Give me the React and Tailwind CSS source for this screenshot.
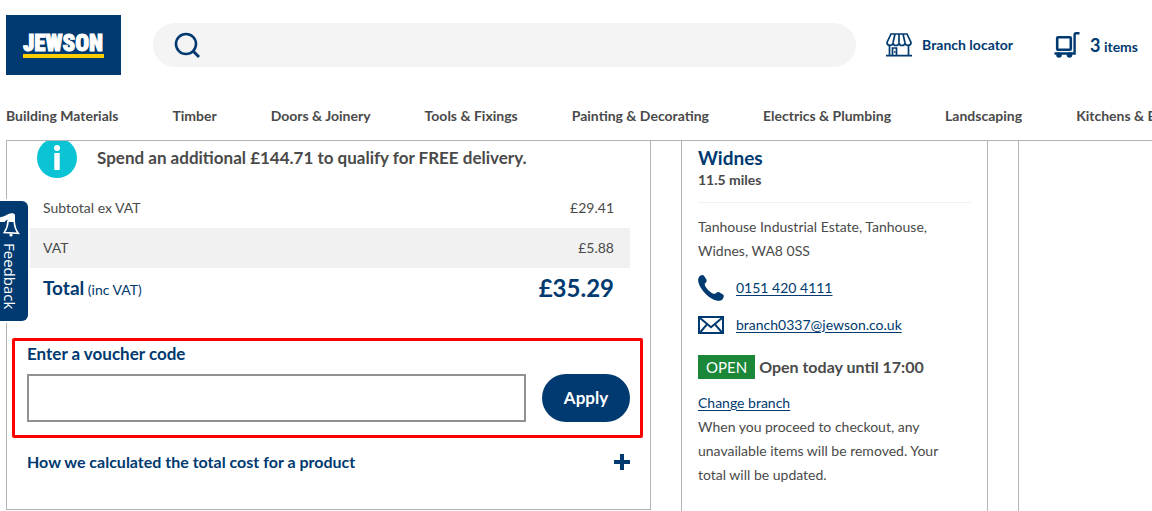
const NAV_ITEMS = [
  "Building Materials",
  "Timber",
  "Doors & Joinery",
  "Tools & Fixings",
  "Painting & Decorating",
  "Electrics & Plumbing",
  "Landscaping",
  "Kitchens & Bathrooms",
];

function Logo() {
  return (
    <a href="#home" className="shrink-0" aria-label="Jewson">
      <svg width="115" height="60" viewBox="0 0 115 60">
        <rect width="115" height="60" fill="#003a70" />
        <text
          x="57"
          y="36"
          textAnchor="middle"
          fontFamily="'Roboto Condensed', Roboto, sans-serif"
          fontWeight="900"
          fontSize="23"
          fill="#fff"
          stroke="#fff"
          strokeWidth="1"
        >
          JEWSON
        </text>
        <rect x="17" y="39" width="81" height="4" fill="#ffce00" />
      </svg>
    </a>
  );
}

function SearchIcon() {
  return (
    <svg width="27" height="27" viewBox="0 0 27 27" fill="none" stroke="#003a70" strokeWidth="2.6">
      <circle cx="12" cy="12" r="10" />
      <path d="M18.8 18.8L25 25" strokeWidth="3" />
    </svg>
  );
}

function StoreIcon() {
  return (
    <svg width="26" height="24" viewBox="0 0 26 24" fill="none" stroke="#003a70" strokeWidth="1.7">
      <path d="M5 1H21L25 9.5C25 13.4 19.2 13.4 19 9.8C18.6 13.4 13.4 13.4 13 9.8C12.6 13.4 7.4 13.4 7 9.8C6.8 13.4 1 13.4 1 9.5Z" />
      <path d="M9 1L7 9.8M13 1V9.8M17 1L19 9.8" />
      <path d="M3.5 12.5V22M22.5 12.5V22M0 22.6H26M6.5 22V15H10.5V22" />
      <path d="M8.8 18V20" strokeWidth="1.2" />
    </svg>
  );
}

function TrolleyIcon() {
  return (
    <svg width="26" height="26" viewBox="0 0 26 26" fill="none" stroke="#003a70">
      <rect x="3.2" y="5.2" width="13.6" height="12.6" rx="1" strokeWidth="2.6" />
      <path d="M25.5 1.3H22.2C21 1.3 20.6 2 20.6 3V21.5H0.5" strokeWidth="2.4" />
      <circle cx="5" cy="23" r="2.8" fill="#003a70" stroke="none" />
      <circle cx="15.5" cy="23" r="2.8" fill="#003a70" stroke="none" />
    </svg>
  );
}

function InfoIcon() {
  return (
    <svg width="40" height="40" viewBox="0 0 40 40" className="shrink-0">
      <circle cx="20" cy="20" r="20" fill="#0ac4d6" />
      <circle cx="20" cy="10" r="3" fill="#fff" />
      <path d="M17.3 15H22.7V32H17.3Z" fill="#fff" />
    </svg>
  );
}

function PhoneIcon() {
  return (
    <svg width="26" height="26" viewBox="0 0 26 26" fill="#003a70" className="shrink-0">
      <path d="M1.2 1.8C2.4 0.2 4.8-0.6 6 0.8L8.4 4.6C9.2 6.2 8 7.4 6.8 8.6C6.4 10.6 8.2 13 10.6 15.4C13 17.6 15.4 19.2 17.2 18.8C18.6 17.4 20 16.6 21.6 17.4L25 19.6C26.4 20.8 25.8 22.8 24.4 24.4C22.4 26.4 18.6 26.4 14 23.8C9.6 21.4 5.4 17.2 2.8 12.8C0.2 8.4-0.8 4.2 1.2 1.8Z" />
    </svg>
  );
}

function MailIcon() {
  return (
    <svg width="26" height="18" viewBox="0 0 26 18" fill="none" stroke="#003a70" className="shrink-0">
      <rect x="1" y="1" width="24" height="16" strokeWidth="2" />
      <path d="M2 2L13 11.2L24 2M2 16.5L9.2 8.2M24 16.5L16.8 8.2" strokeWidth="2" />
    </svg>
  );
}

function MegaphoneIcon() {
  return (
    <svg width="20" height="24" viewBox="0 0 20 24" fill="none" stroke="#fff" strokeWidth="1.6">
      <path d="M0 4.2C3.4 4.2 6 2 8.4 1C11 0 14.8-0.2 15 2.4V9H7.4V6.6L6 7.4L4.6 9H0Z" fill="#fff" stroke="none" />
      <path d="M8 8C8 13 6.8 15.6 4.2 19.6L18.4 20.4C15.4 16.6 14.4 13 14.2 8" />
      <circle cx="11" cy="22" r="1.6" fill="#fff" stroke="none" />
    </svg>
  );
}

function Header() {
  return (
    <header>
      <div className="flex items-center pl-[6px] pr-[14px] pt-[15px]">
        <Logo />
        <form className="ml-8 flex h-11 flex-1 items-center rounded-full bg-[#f4f4f4] pl-[21px] pr-5">
          <button type="submit" aria-label="Search"><SearchIcon /></button>
          <input type="search" aria-label="Search products" className="ml-3 min-w-0 flex-1 bg-transparent text-base outline-none" />
        </form>
        <a href="#branches" className="ml-[30px] flex items-center gap-[10px] whitespace-nowrap text-sm font-bold text-[#003a70]">
          <StoreIcon />
          Branch locator
        </a>
        <a href="#basket" className="ml-[41px] flex items-center gap-[10px] whitespace-nowrap text-sm font-bold text-[#003a70]">
          <TrolleyIcon />
          <span><span className="text-lg">3</span> items</span>
        </a>
      </div>
      <nav className="ml-[6px] mt-[31px] flex gap-[54px] overflow-hidden border-b border-[#b4b4b4] pb-[14px]">
        {NAV_ITEMS.map((item) => (
          <a key={item} href="#category" className="shrink-0 whitespace-nowrap text-sm font-bold leading-5 text-[#4a4a4a]">{item}</a>
        ))}
      </nav>
    </header>
  );
}

function Totals() {
  return (
    <table className="mt-[10px] w-full">
      <tbody>
        <tr className="h-10">
          <th scope="row" className="pl-4 text-left font-normal">Subtotal ex VAT</th>
          <td className="pr-4 text-right">£29.41</td>
        </tr>
        <tr className="h-10 bg-[#f1f1f1]">
          <th scope="row" className="pl-4 text-left font-normal">VAT</th>
          <td className="pr-4 text-right">£5.88</td>
        </tr>
        <tr className="h-10 text-[#003a70]">
          <th scope="row" className="pl-4 text-left font-normal"><span className="text-[19px] font-bold">Total</span> (inc VAT)</th>
          <td className="pr-4 text-right text-2xl font-bold">£35.29</td>
        </tr>
      </tbody>
    </table>
  );
}

function Summary() {
  return (
    <section className="self-start overflow-hidden border-x border-b border-[#b4b4b4]">
      <div className="px-5">
        <div className="-mt-[3px] flex items-center gap-5 pl-[10px]">
          <InfoIcon />
          <p className="whitespace-nowrap text-[17px] font-bold leading-6">Spend an additional £144.71 to qualify for FREE delivery.</p>
        </div>
        <Totals />
      </div>
      <form className="ml-[5px] mr-[7px] mt-[30px] rounded-xs border-3 border-[#ff0000] pb-[13px] pl-3 pr-[10px] pt-[1px]">
        <label htmlFor="voucher" className="block text-[17px] font-bold leading-6 text-[#003a70]">Enter a voucher code</label>
        <div className="mt-2 flex gap-4">
          <input id="voucher" type="text" className="h-12 min-w-0 flex-1 border-2 border-[#919191] px-3 text-base outline-none" />
          <button type="submit" className="h-12 w-[88px] rounded-full bg-[#003a70] text-[17px] font-bold text-white">Apply</button>
        </div>
      </form>
      <button type="button" className="flex h-[71px] w-full items-start justify-between pl-5 pr-5 pt-3 text-left text-base font-bold leading-6 text-[#003a70]">
        How we calculated the total cost for a product
        <svg width="16" height="16" viewBox="0 0 16 16" className="mt-1 shrink-0" fill="#003a70">
          <path d="M6 0H10V6H16V10H10V16H6V10H0V6H6Z" />
        </svg>
      </button>
    </section>
  );
}

function Branch() {
  return (
    <section className="border-x border-[#b4b4b4] px-4 pt-[5px] leading-6">
      <h2 className="text-[19px] font-bold leading-6 text-[#003a70]">Widnes</h2>
      <p className="text-sm font-bold leading-5">11.5 miles</p>
      <hr className="mt-3 border-[#f1f1f1]" />
      <address className="mt-3 not-italic">
        Tanhouse Industrial Estate, Tanhouse,
        <br />
        Widnes, WA8 0SS
        <a href="tel:01514204111" className="mt-3 flex items-center gap-3 text-[#003a70] underline underline-offset-2">
          <PhoneIcon />
          0151 420 4111
        </a>
        <a href="mailto:branch0337@jewson.co.uk" className="mt-3 flex items-center gap-3 text-[#003a70] underline underline-offset-2">
          <MailIcon />
          branch0337@jewson.co.uk
        </a>
      </address>
      <p className="mt-[18px] flex items-center gap-1 text-base font-bold leading-6">
        <span className="bg-[#1b8738] px-2 text-[15px] font-normal text-white">OPEN</span>
        Open today until 17:00
      </p>
      <a href="#change-branch" className="mt-3 block text-[#003a70] underline underline-offset-2">Change branch</a>
      <p className="pr-5">When you proceed to checkout, any unavailable items will be removed. Your total will be updated.</p>
    </section>
  );
}

export default function App() {
  return (
    <div className="relative flex h-screen flex-col overflow-hidden bg-white font-['Lato',sans-serif] text-sm text-[#4a4a4a]">
      <Header />
      <main className="ml-[6px] grid flex-1 grid-cols-[645fr_307fr_134fr] gap-[30px]">
        <Summary />
        <Branch />
        <aside className="border-l border-[#b4b4b4]" />
      </main>
      <button
        type="button"
        className="absolute left-0 top-[199px] flex h-[124px] w-[30px] flex-col items-start gap-[6px] rounded-r-lg border-y-2 border-r-2 border-white bg-[#003a70] pt-3 font-['Open_Sans',sans-serif] text-[15px] leading-5 text-white"
      >
        <MegaphoneIcon />
        <span className="[writing-mode:vertical-rl]">Feedback</span>
      </button>
    </div>
  );
}
